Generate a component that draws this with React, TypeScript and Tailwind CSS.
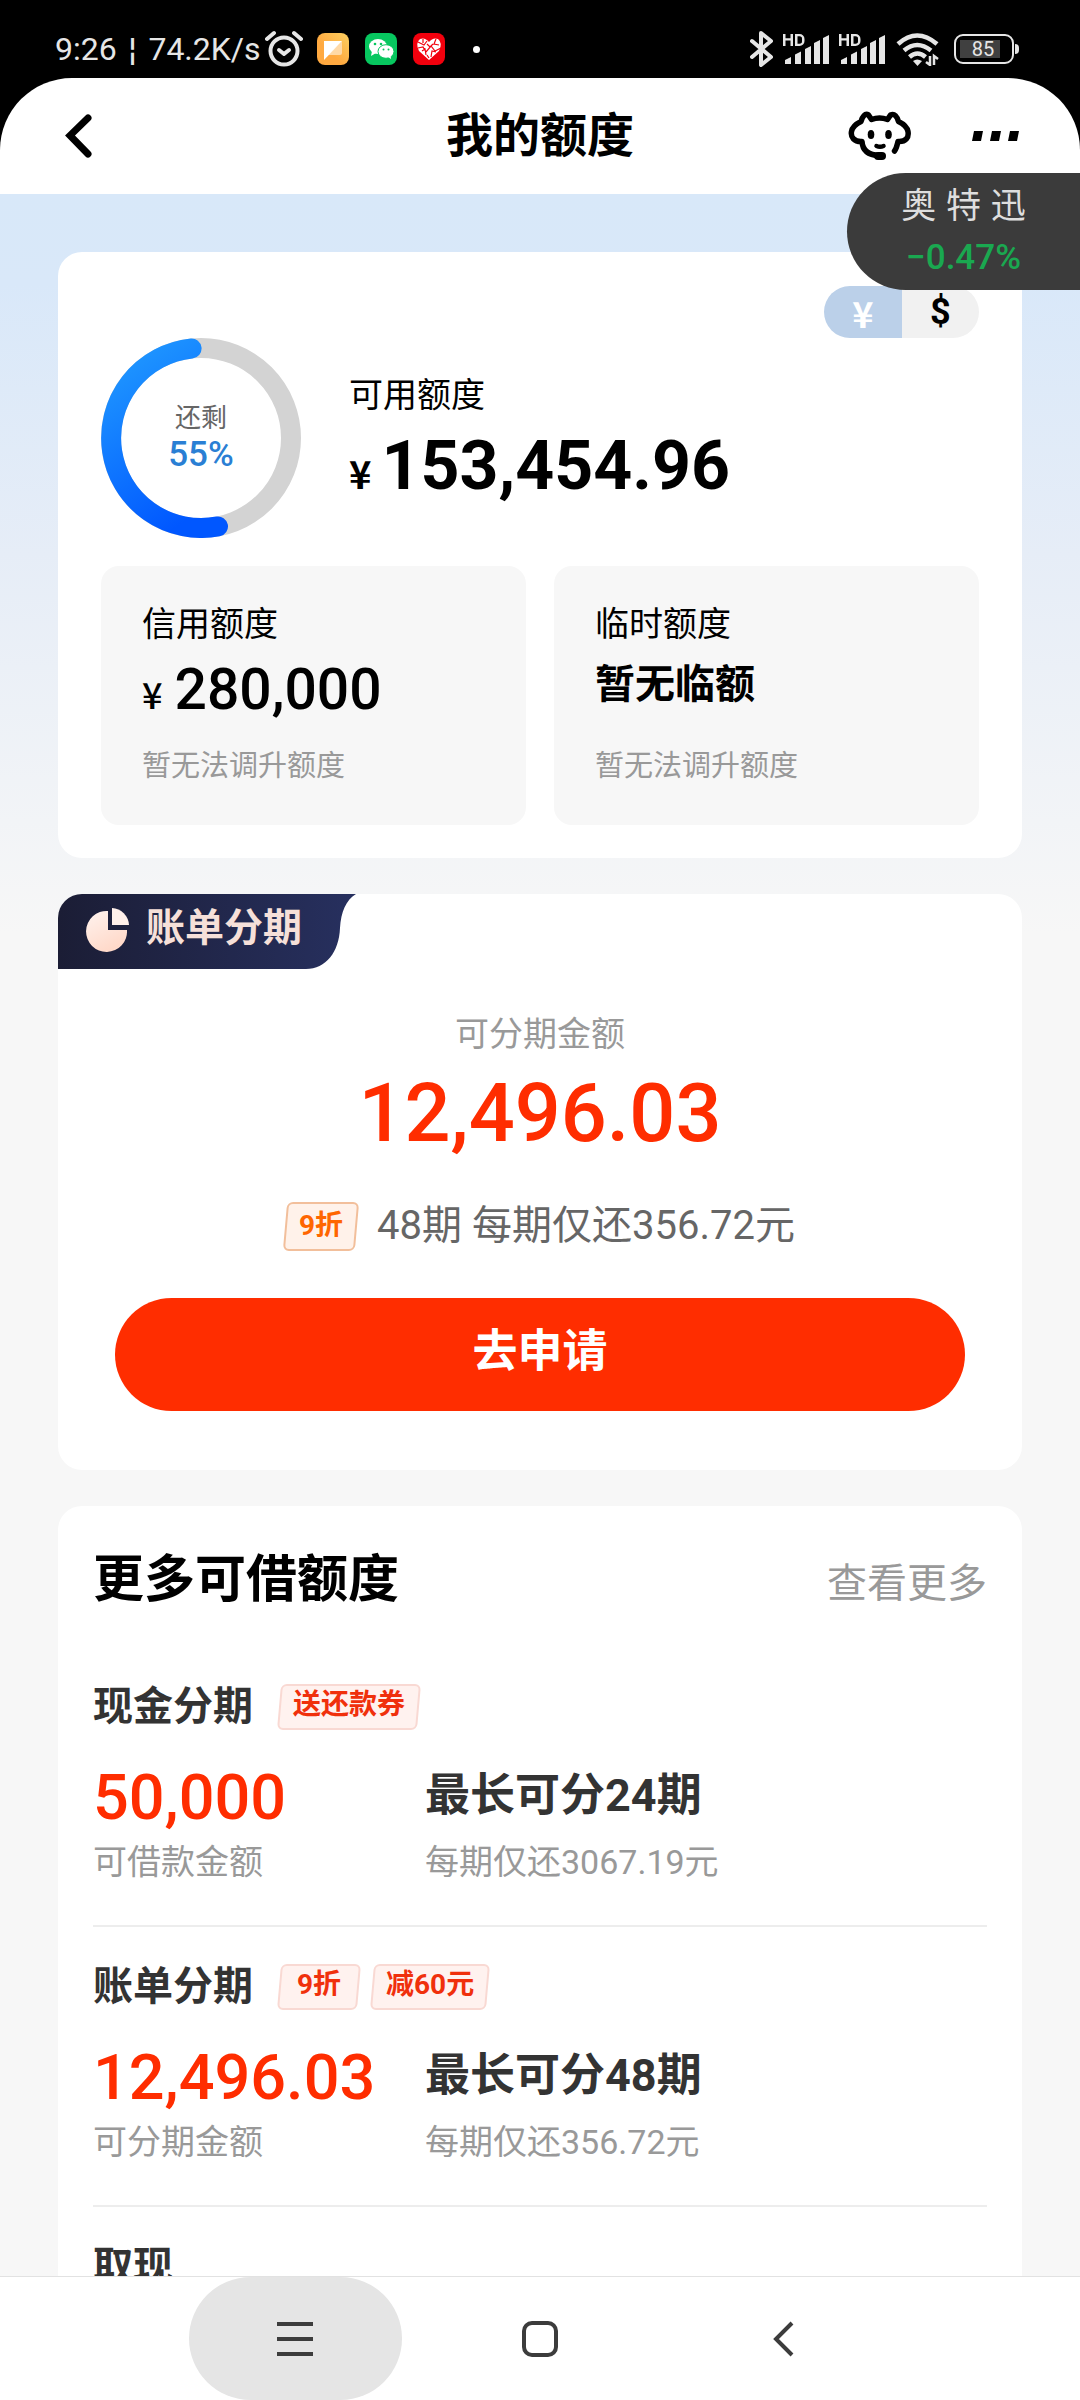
import React from "react";

const SANS = "font-[Roboto,'Noto_Sans_CJK_SC',sans-serif]";

function SignalBars() {
  return (
    <svg width="46" height="34" viewBox="0 0 46 34" fill="#e6e6e6" aria-hidden="true">
      <path d="M0 2h2.500v4.200h5V2H10v12H7.500V8.500h-5V14H0zM12 2h4.500a5 5 0 0 1 5 5v2a5 5 0 0 1-5 5H12zm2.500 2.300v7.400h2A2.500 2.500 0 0 0 19 9V7a2.500 2.500 0 0 0-2.500-2.700z" />
      <path d="M2 28l6-3v7H2zM12 22.500l6-3V32h-6zM22 17l6-3v18h-6zM31 11l6-3v24h-6zM40 6l6-3v29h-6z" />
    </svg>
  );
}

function StatusBar() {
  return (
    <div className="flex h-[78px] items-center justify-between bg-black pl-[55px] pr-[61px] pt-[20px] text-[#e6e6e6]">
      <div className="flex items-center">
        <div className="flex gap-3 text-[32px] leading-[36px]">
          <span>9:26</span>
          <span>¦</span>
          <span>74.2K/s</span>
        </div>
        <svg className="ml-1" width="38" height="38" viewBox="0 0 38 38" fill="none" stroke="#e6e6e6" strokeLinecap="round" aria-hidden="true">
          <circle cx="19" cy="21" r="13.500" strokeWidth="4" />
          <path d="M14 20l5 4 5-4" strokeWidth="4" strokeLinejoin="round" />
          <path d="M2 9l7-6M36 9l-7-6" strokeWidth="4" />
        </svg>
        <svg className="ml-[14px]" width="32" height="32" viewBox="0 0 32 32" aria-hidden="true">
          <defs>
            <linearGradient id="noteBg" x1="0" y1="1" x2="1" y2="0">
              <stop offset="0.400" stopColor="#ffa940" />
              <stop offset="1" stopColor="#fcd060" />
            </linearGradient>
          </defs>
          <rect width="32" height="32" rx="8" fill="url(#noteBg)" />
          <path d="M25 8v12q0 2-2 2H11z" fill="#ffd9a6" />
          <path d="M7 8h18L7 27z" fill="#fff" />
        </svg>
        <svg className="ml-4" width="32" height="32" viewBox="0 0 32 32" aria-hidden="true">
          <rect width="32" height="32" rx="8" fill="#07c75f" />
          <ellipse cx="13" cy="13.500" rx="9" ry="7.500" fill="#fff" />
          <path d="M7 18l-1 5 5-3z" fill="#fff" />
          <ellipse cx="21" cy="18.500" rx="8" ry="6.800" fill="#fff" stroke="#07c75f" strokeWidth="1" />
          <path d="M23 24l3 2-.5-4z" fill="#fff" />
          <g fill="#07c75f">
            <circle cx="10" cy="11" r="1.300" /><circle cx="16" cy="11" r="1.300" />
            <circle cx="18.500" cy="16.500" r="1" /><circle cx="23.500" cy="16.500" r="1" />
          </g>
        </svg>
        <svg className="ml-4" width="32" height="32" viewBox="0 0 32 32" aria-hidden="true">
          <rect width="32" height="32" rx="8" fill="#f2000d" />
          <path d="M16 27L6 18Q2 10 7 6q5-2 9 3 4-5 9-3 5 4 1 12z" fill="#fff" />
          <path d="M5 9l6 3 3-4m-9 7l5-1 3 5 5-6 4 5 6-3M10 6v4m13-4l-2 5 5 1M9 18l3-2 1 6m5 2l1-6 4 1m-9-8l3 3 3-3m-6 11l2 3" fill="none" stroke="#f2000d" strokeWidth="1.200" />
        </svg>
        <span className="ml-7 size-[7px] rounded-full bg-white" />
      </div>
      <div className="flex items-center">
        <svg width="24" height="38" viewBox="0 0 24 38" fill="none" stroke="#e6e6e6" strokeWidth="4" strokeLinejoin="round" strokeLinecap="round" aria-hidden="true">
          <path d="M2 11l19 16-10 8V3l10 8L2 27" />
        </svg>
        <div className="ml-[9px] flex gap-[10px]">
          <SignalBars />
          <SignalBars />
        </div>
        <svg className="ml-[11px]" width="44" height="34" viewBox="0 0 44 34" fill="none" stroke="#e6e6e6" strokeWidth="4.500" aria-hidden="true">
          <path d="M2 12Q21-5 41 12M8 18.500q13-11 27 0M13.500 25q8-7 16 0" />
          <path d="M17 29q4-3 9 0l-4.500 5z" fill="#e6e6e6" stroke="none" />
          <path d="M34 24v9l-4-3M38 33v-9l4 3" strokeWidth="2.500" />
        </svg>
        <div className="ml-[14px] flex items-center gap-px">
          <div className="rounded-[9px] border-2 border-[#e6e6e6] p-1">
            <div className="flex h-[18px] w-[48px] items-center bg-[linear-gradient(90deg,#404040_83%,transparent_83%)] text-[20px] leading-none">
              <span className="w-[46px] text-center">85</span>
            </div>
          </div>
          <span className="h-[10px] w-1 rounded-r bg-[#e6e6e6]" />
        </div>
      </div>
    </div>
  );
}

function Header() {
  return (
    <header className="bg-black">
      <div className="grid h-[116px] grid-cols-[1fr_auto_1fr] items-center rounded-t-[72px] bg-white px-[60px]">
        <button aria-label="返回" className="justify-self-start">
          <svg width="36" height="48" viewBox="0 0 36 48" fill="none" stroke="#000" strokeWidth="7" strokeLinecap="round">
            <path d="M28 6L10 23.500 28 42" />
          </svg>
        </button>
        <h1 className="text-[47px] leading-[60px] font-bold">我的额度</h1>
        <div className="flex items-center gap-[58px] justify-self-end">
          <button aria-label="客服">
            <svg width="64" height="50" viewBox="0 0 64 50" fill="none" stroke="#000" strokeWidth="5.500" strokeLinecap="round" strokeLinejoin="round">
              <path d="M14 30.500C6 31 2.500 26 3.500 20.500 4.500 15 9 12.500 13 10.500c1.500-5 4-8.500 7.500-6.500l3 4.500c5-2 11-2 16 0l3-4.500c4-2 6.500 1.500 8 6.500 4 2 8.500 4.500 9.500 10 1 6-2 10.500-10 10-1 4-1.500 7-3.500 9.500M14 30.500c.5 8 5 13.500 17 14" />
              <path d="M28.500 35q3.500 1.500 7 0" strokeWidth="4.500" />
              <ellipse cx="23" cy="23.500" rx="3.300" ry="4.500" fill="#000" stroke="none" />
              <ellipse cx="40.500" cy="23.500" rx="3.300" ry="4.500" fill="#000" stroke="none" />
              <rect x="26" y="41" width="12" height="8" rx="4" fill="#000" stroke="none" />
            </svg>
          </button>
          <button aria-label="更多">
            <svg width="50" height="20" viewBox="0 0 50 20">
              <path d="M4 5h9l-2 10H2zM22 5h9l-2 10h-9zM40 5h9l-2 10h-9z" />
            </svg>
          </button>
        </div>
      </div>
    </header>
  );
}

function Ring() {
  return (
    <div className="grid size-[200px] place-items-center">
      <svg className="col-start-1 row-start-1" width="200" height="200" viewBox="0 0 200 200" fill="none" strokeWidth="20" aria-hidden="true">
        <defs>
          <linearGradient id="ring" x1="0.200" y1="0" x2="0.600" y2="1">
            <stop offset="0" stopColor="#1f97ff" />
            <stop offset="1" stopColor="#0057ff" />
          </linearGradient>
        </defs>
        <circle cx="100" cy="100" r="90" stroke="#d3d3d3" />
        <path d="M90.600 10.500A90 90 0 1 0 117 188.400" stroke="url(#ring)" strokeLinecap="round" />
      </svg>
      <div className="col-start-1 row-start-1 pb-1 text-center">
        <p className="text-[26px] leading-[38px] text-[#666]">还剩</p>
        <p className="text-[35px] leading-[36px] font-medium text-[#2a7fd4]">55%</p>
      </div>
    </div>
  );
}

function Tag({ children, tone = "red" }: { children: React.ReactNode; tone?: "red" | "orange" }) {
  const shape =
    tone === "red"
      ? "h-[46px] min-w-[80px] border-[#f9d9d3] bg-[#fff2ef]"
      : "h-[49px] border-[#f2bf9b] bg-[#fff2ea]";
  const text =
    tone === "red" ? "leading-[42px] text-[#f0300c]" : "leading-[48px] text-[#ff6600]";
  return (
    <span className="grid">
      <span className={`col-start-1 row-start-1 -skew-x-5 rounded-md border-2 ${shape}`} />
      <span className={`z-10 col-start-1 row-start-1 px-[14px] text-center text-[28px] font-bold ${text}`}>{children}</span>
    </span>
  );
}

function QuotaPanel({ title, note, children }: { title: string; note: string; children: React.ReactNode }) {
  return (
    <div className="h-[259px] rounded-[18px] bg-[#f7f7f7] px-[41px] pt-[34px]">
      <p className="text-[34px] leading-[48px]">{title}</p>
      <div className="h-[76px]">{children}</div>
      <p className="mt-[22px] text-[29px] leading-[40px] text-[#999]">{note}</p>
    </div>
  );
}

function QuotaCard() {
  return (
    <section className="rounded-3xl bg-white px-[43px] pt-[34px] pb-[33px]">
      <div className="ml-auto grid h-[52px] w-[155px] grid-cols-2 overflow-hidden rounded-full text-[36px] font-bold">
        <button className="bg-[#bbd0e9] font-['Noto_Sans_CJK_SC'] leading-[48px] text-white">¥</button>
        <button className="bg-[#f1f1f1] leading-[52px]">$</button>
      </div>
      <div className="flex items-center gap-[48px]">
        <Ring />
        <div className="pt-3">
          <p className="text-[34px] leading-[50px]">可用额度</p>
          <p className="flex items-baseline gap-[10px] leading-[92px] font-bold">
            <span className="font-['Noto_Sans_CJK_SC'] text-[38px]">¥</span>
            <span className="text-[68px]">153,454.96</span>
          </p>
        </div>
      </div>
      <div className="mt-7 grid grid-cols-2 gap-7">
        <QuotaPanel title="信用额度" note="暂无法调升额度">
          <p className="flex items-baseline gap-3 leading-[84px] font-medium">
            <span className="font-['Noto_Sans_CJK_SC'] text-[36px]">¥</span>
            <span className="text-[57px]">280,000</span>
          </p>
        </QuotaPanel>
        <QuotaPanel title="临时额度" note="暂无法调升额度">
          <p className="text-[40px] leading-[74px] font-bold">暂无临额</p>
        </QuotaPanel>
      </div>
    </section>
  );
}

function InstallmentCard() {
  return (
    <section className="overflow-hidden rounded-3xl bg-white pb-[59px]">
      <div className="grid h-[75px] w-[298px]">
        <svg className="col-start-1 row-start-1" width="298" height="75" viewBox="0 0 298 75" aria-hidden="true">
          <defs>
            <linearGradient id="tab" x1="0" y1="0" x2="1" y2="0">
              <stop offset="0" stopColor="#1b1d35" />
              <stop offset="1" stopColor="#27305f" />
            </linearGradient>
          </defs>
          <path d="M0 0H298C288 6 283 18 282 34 281 58 268 75 248 75H0z" fill="url(#tab)" />
        </svg>
        <div className="z-10 col-start-1 row-start-1 flex h-[68px] items-center gap-4 pl-7 text-[#f6e0d9]">
          <svg className="mt-[4px]" width="44" height="44" viewBox="0 0 44 44" aria-hidden="true">
            <defs>
              <linearGradient id="pie" x1="0" y1="0" x2="0.500" y2="1">
                <stop offset="0" stopColor="#fff3ef" />
                <stop offset="1" stopColor="#ffd9c9" />
              </linearGradient>
            </defs>
            <path d="M22 3v19h19A20.500 20.500 0 1 1 22 3z" fill="url(#pie)" />
            <path d="M26 0a18 18 0 0 1 17 17H26z" fill="#fff0ea" />
          </svg>
          <h2 className="text-[39px] leading-[60px] font-bold">账单分期</h2>
        </div>
      </div>
      <div className="flex flex-col items-center px-[57px] pt-[41px]">
        <p className="text-[34px] leading-[48px] text-[#999]">可分期金额</p>
        <p className="text-[81px] leading-[112px] font-medium text-[#ff2d00]">12,496.03</p>
        <div className="mt-7 flex items-center gap-5 pb-[44px]">
          <Tag tone="orange">9折</Tag>
          <span className="text-[40px] leading-[56px] text-[#666]">48期 每期仅还356.72元</span>
        </div>
        <button className="h-[113px] w-full rounded-full bg-[#ff2d00] pb-[6px] text-[45px] font-bold text-white">去申请</button>
      </div>
    </section>
  );
}

type Loan = { name: string; tags: string[]; amount: string; amountLabel: string; term: string; monthly: string };

const loans: Loan[] = [
  { name: "现金分期", tags: ["送还款券"], amount: "50,000", amountLabel: "可借款金额", term: "最长可分24期", monthly: "每期仅还3067.19元" },
  { name: "账单分期", tags: ["9折", "减60元"], amount: "12,496.03", amountLabel: "可分期金额", term: "最长可分48期", monthly: "每期仅还356.72元" },
];

function LoanRow({ loan }: { loan: Loan }) {
  return (
    <article className="border-b-2 border-[#ededed] pt-[30px] pb-[39px]">
      <div className="flex items-center gap-[26px]">
        <h3 className="text-[40px] leading-[60px] font-bold text-[#333]">{loan.name}</h3>
        <div className="flex gap-[13px]">
          {loan.tags.map((tag) => (
            <Tag key={tag}>{tag}</Tag>
          ))}
        </div>
      </div>
      <div className="mt-[21px] grid grid-cols-[332px_1fr]">
        <p className="text-[63px] leading-[80px] font-medium text-[#ff2d00]">{loan.amount}</p>
        <p className="text-[45px] leading-[76px] font-bold text-[#333]">{loan.term}</p>
        <p className="text-[34px] leading-[48px] text-[#999]">{loan.amountLabel}</p>
        <p className="text-[34px] leading-[48px] text-[#999]">{loan.monthly}</p>
      </div>
    </article>
  );
}

function MoreCard() {
  return (
    <section className="min-h-0 flex-1 overflow-hidden rounded-t-3xl bg-white px-[35px] pt-[36px]">
      <div className="flex items-center justify-between pb-[29px]">
        <h2 className="text-[51px] leading-[76px] font-bold">更多可借额度</h2>
        <a href="#more" className="pt-2 text-[40px] leading-[60px] text-[#999]">查看更多</a>
      </div>
      {loans.map((loan) => (
        <LoanRow key={loan.name} loan={loan} />
      ))}
      <h3 className="pt-[30px] text-[40px] leading-[60px] font-bold text-[#333]">取现</h3>
    </section>
  );
}

function SystemNav() {
  return (
    <nav className="flex h-[124px] justify-center gap-8 border-t border-[#e2e2e2] bg-white">
      <button aria-label="最近任务" className="grid w-[213px] place-items-center rounded-full bg-[#e5e5e5]">
        <svg width="36" height="36" viewBox="0 0 36 36" stroke="#3c3c3c" strokeWidth="4">
          <path d="M0 3h36M0 18h36M0 33h36" />
        </svg>
      </button>
      <button aria-label="主屏幕" className="grid w-[213px] place-items-center">
        <svg width="36" height="36" viewBox="0 0 36 36" fill="none" stroke="#3c3c3c" strokeWidth="4">
          <rect x="2" y="2" width="32" height="32" rx="8" />
        </svg>
      </button>
      <button aria-label="后退" className="grid w-[213px] place-items-center">
        <svg width="36" height="36" viewBox="0 0 36 36" fill="none" stroke="#3c3c3c" strokeWidth="4">
          <path d="M25 2L9 18l16 16" />
        </svg>
      </button>
    </nav>
  );
}

export default function App() {
  return (
    <div className={`relative flex h-screen flex-col overflow-hidden bg-[#f7f7f7] text-black ${SANS}`}>
      <StatusBar />
      <Header />
      <main className="flex min-h-0 flex-1 flex-col gap-9 bg-[linear-gradient(#d8e8f9_0px,#d9e8f9_90px,#e6edf7_360px,#f7f7f7_740px)] px-[58px] pt-[58px]">
        <QuotaCard />
        <InstallmentCard />
        <MoreCard />
      </main>
      <SystemNav />
      <aside className="absolute top-[173px] right-0 h-[117px] w-[233px] rounded-l-full bg-[#3b3b3b] pt-[8px] text-center">
        <p className="font-['Liberation_Sans','Noto_Sans_CJK_SC',sans-serif] text-[35px] leading-[50px] text-[#dedede]">奥 特 迅</p>
        <p className="text-[35px] leading-[54px] font-medium text-[#1aa850]">−0.47%</p>
      </aside>
    </div>
  );
}
